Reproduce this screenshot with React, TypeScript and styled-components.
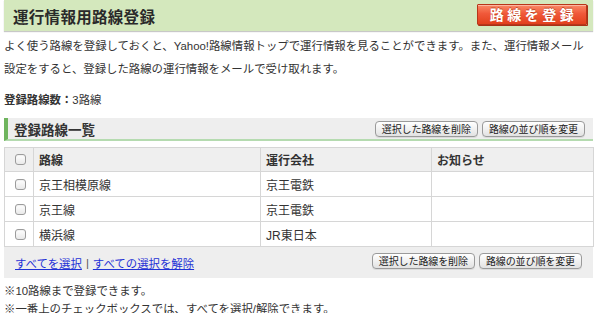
import React from "react";
import styled, { createGlobalStyle } from "styled-components";

const Global = createGlobalStyle`
  html, body { margin: 0; padding: 0; background: #fff; }
  body {
    font-family: "Liberation Sans", "Noto Sans CJK JP", sans-serif;
    color: #333;
  }
`;

const Page = styled.div`
  width: 589px;
  padding: 0 7px 0 4px;
`;

const Header = styled.header`
  display: flex;
  align-items: center;
  justify-content: space-between;
  height: 31px;
  padding: 0 6px 0 9px;
  background: #d4e8bd;
  box-shadow: 0 1px 1px #c8c8c8;
`;

const Title = styled.h1`
  margin: 0;
  font-size: 15.5px;
  font-weight: bold;
  color: #2a2a2a;
  letter-spacing: 0.3px;
`;

const RegisterButton = styled.button`
  width: 110px;
  height: 21px;
  margin-top: -2px;
  padding: 0 0 0 3px;
  border: 1px solid #b8361a;
  border-radius: 1px;
  background: linear-gradient(#fa8a66 0%, #f0593a 45%, #e2401c 100%);
  box-shadow: inset 0 1px 0 rgba(255, 255, 255, 0.4), 1px 1px 0 #a83117;
  color: #fff;
  font-family: "Noto Sans CJK JP", sans-serif;
  font-size: 14px;
  font-weight: bold;
  letter-spacing: 3.5px;
  line-height: 19px;
  text-shadow: 0 -1px 0 rgba(140, 30, 0, 0.5);
`;

const Intro = styled.p`
  margin: 4px 0 0;
  font-size: 11.4px;
  line-height: 23px;
  color: #333;
`;

const Count = styled.p`
  margin: 10px 0 0;
  font-size: 11.4px;
  line-height: 18px;
`;

const CountLabel = styled.span`
  font-weight: bold;
`;

const SectionBar = styled.div`
  display: flex;
  align-items: center;
  justify-content: space-between;
  margin-top: 9px;
  height: 21px;
  padding: 0 8px 0 6px;
  background: #eeeeee;
  border-left: 4px solid #6fb45e;
  border-bottom: 2px solid #b5dbb0;
`;

const SectionTitle = styled.h2`
  margin: 0;
  font-size: 13.5px;
  font-weight: bold;
  color: #333;
`;

const ButtonGroup = styled.div<{ $gap?: number }>`
  display: flex;
  gap: ${(p) => p.$gap ?? 4}px;
`;

const SmallButton = styled.button`
  height: 16px;
  padding: 0 6px;
  border: 1px solid #9a9a9a;
  border-radius: 4px;
  background: linear-gradient(#ffffff 0%, #f1f1f1 50%, #e2e2e2 100%);
  box-shadow: 0 1px 0 rgba(0, 0, 0, 0.08);
  font-family: "Noto Sans CJK JP", sans-serif;
  font-size: 10px;
  line-height: 14px;
  color: #222;
  letter-spacing: -0.1px;
  white-space: nowrap;
`;

const Table = styled.table`
  margin-top: 6px;
  width: 589px;
  border-collapse: collapse;
  table-layout: fixed;
  font-size: 12px;
`;

const HeadCell = styled.th`
  height: 23px;
  padding: 0 5px;
  background: #efefef;
  border: 1px solid #d6d6d6;
  text-align: left;
  font-weight: bold;
  color: #333;
`;

const Cell = styled.td`
  height: 24px;
  padding: 0 5px;
  border: 1px solid #d6d6d6;
  color: #333;
`;

const CheckCell = styled.td<{ $head?: boolean }>`
  height: ${(p) => (p.$head ? 23 : 24)}px;
  padding: 0;
  text-align: center;
  background: ${(p) => (p.$head ? "#efefef" : "#fff")};
  border: 1px solid #d6d6d6;
`;

const Check = styled.input.attrs({ type: "checkbox" })`
  appearance: none;
  -webkit-appearance: none;
  display: block;
  margin: 0 0 0 10px;
  width: 11px;
  height: 11px;
  border: 1px solid #9c9c9c;
  border-radius: 3px;
  background: linear-gradient(#ffffff, #e9e9e9);
  box-shadow: inset 0 1px 1px rgba(0, 0, 0, 0.06);
`;

const FooterBar = styled.div`
  display: flex;
  align-items: center;
  justify-content: space-between;
  height: 31px;
  padding: 0 11px 0 11px;
  background: #eeeeee;
`;

const Links = styled.div`
  display: flex;
  align-items: center;
  gap: 4px;
  font-size: 11.4px;
  color: #555;
  margin-top: 1px;
`;

const Link = styled.a`
  color: #1f31d6;
  text-decoration: underline;
`;

const FooterButtons = styled(ButtonGroup)`
  margin-top: -4px;
`;

const Notes = styled.div`
  margin-top: 4px;
  font-size: 11.4px;
  line-height: 18px;
  color: #333;
`;

const NoteLine = styled.p`
  margin: 0;
`;

const routes = [
  { name: "京王相模原線", company: "京王電鉄" },
  { name: "京王線", company: "京王電鉄" },
  { name: "横浜線", company: "JR東日本" },
];

export default function App() {
  return (
    <>
      <Global />
      <Page>
        <Header>
          <Title>運行情報用路線登録</Title>
          <RegisterButton>路線を登録</RegisterButton>
        </Header>
        <Intro>
          よく使う路線を登録しておくと、Yahoo!路線情報トップで運行情報を見ることができます。また、運行情報メール設定をすると、登録した路線の運行情報をメールで受け取れます。
        </Intro>
        <Count>
          <CountLabel>登録路線数：</CountLabel>3路線
        </Count>
        <SectionBar>
          <SectionTitle>登録路線一覧</SectionTitle>
          <ButtonGroup>
            <SmallButton>選択した路線を削除</SmallButton>
            <SmallButton>路線の並び順を変更</SmallButton>
          </ButtonGroup>
        </SectionBar>
        <Table>
          <colgroup>
            <col style={{ width: 29 }} />
            <col style={{ width: 227 }} />
            <col style={{ width: 171 }} />
            <col style={{ width: 162 }} />
          </colgroup>
          <thead>
            <tr>
              <CheckCell as="th" $head>
                <Check />
              </CheckCell>
              <HeadCell>路線</HeadCell>
              <HeadCell>運行会社</HeadCell>
              <HeadCell>お知らせ</HeadCell>
            </tr>
          </thead>
          <tbody>
            {routes.map((r) => (
              <tr key={r.name}>
                <CheckCell>
                  <Check />
                </CheckCell>
                <Cell>{r.name}</Cell>
                <Cell>{r.company}</Cell>
                <Cell />
              </tr>
            ))}
          </tbody>
        </Table>
        <FooterBar>
          <Links>
            <Link href="#">すべてを選択</Link>
            <span>|</span>
            <Link href="#">すべての選択を解除</Link>
          </Links>
          <FooterButtons>
            <SmallButton>選択した路線を削除</SmallButton>
            <SmallButton>路線の並び順を変更</SmallButton>
          </FooterButtons>
        </FooterBar>
        <Notes>
          <NoteLine>※10路線まで登録できます。</NoteLine>
          <NoteLine>※一番上のチェックボックスでは、すべてを選択/解除できます。</NoteLine>
        </Notes>
      </Page>
    </>
  );
}
